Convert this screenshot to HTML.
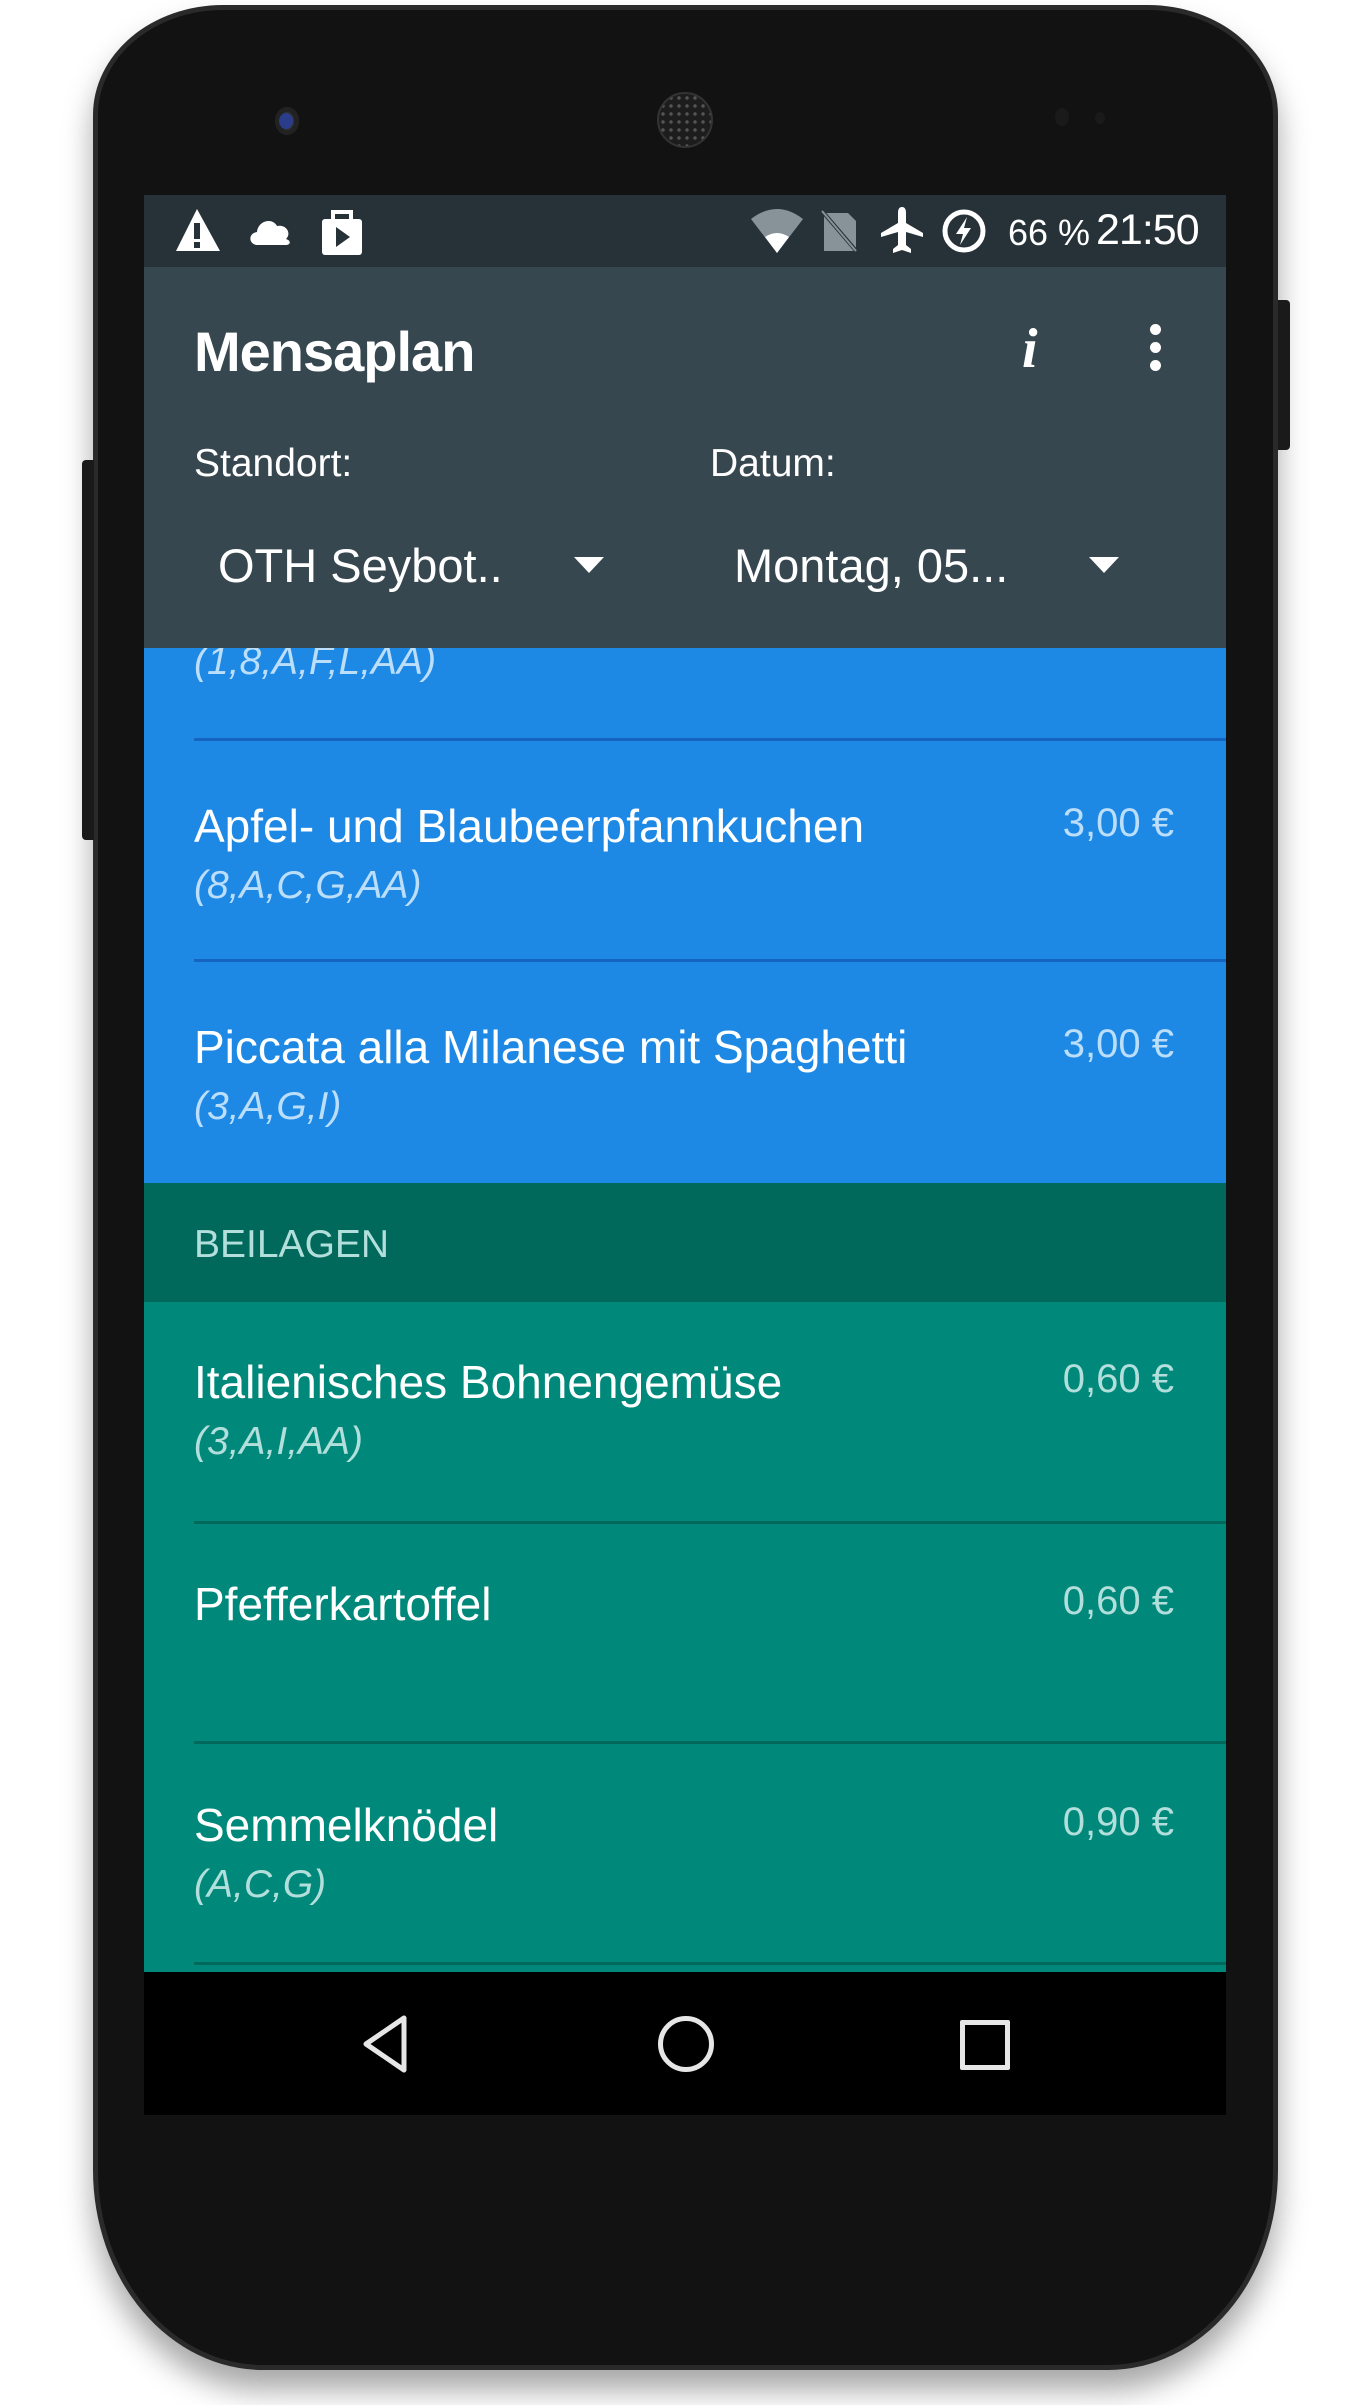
<!DOCTYPE html>
<html><head><meta charset="utf-8"><style>
*{margin:0;padding:0;box-sizing:border-box}
body{width:1370px;height:2405px;background:#fff;position:relative;overflow:hidden;font-family:"Liberation Sans",sans-serif}
.phone{position:absolute;left:93px;top:5px;width:1185px;height:2365px;background:#121212;border-radius:130px 130px 170px 170px/110px 110px 200px 200px;border:5px solid #2a2a2a;box-shadow:0 20px 30px rgba(0,0,0,.35)}
.abs{position:absolute}
.screen{position:absolute;left:144px;top:195px;width:1082px;height:1920px;overflow:hidden}
.t{position:absolute;white-space:nowrap;color:#fff}
.sub{font-size:39px;font-style:italic}
.price{font-size:40px;right:52px}
.div{position:absolute;left:50px;width:1034px;height:3px}
</style></head><body>
<div class="phone"></div>
<div class="abs" style="left:1278px;top:300px;width:12px;height:150px;background:#1a1a1a;border-radius:0 4px 4px 0"></div>
<div class="abs" style="left:82px;top:460px;width:12px;height:380px;background:#1a1a1a;border-radius:4px 0 0 4px"></div>
<div class="abs" style="left:275px;top:107px;width:24px;height:28px;border-radius:50%;background:#333;box-shadow:inset 0 0 0 5px #222"></div>
<div class="abs" style="left:279px;top:113px;width:14px;height:16px;border-radius:50%;background:#2a3d8a"></div>
<div class="abs" style="left:657px;top:92px;width:56px;height:56px;border-radius:50%;background:radial-gradient(#555 1.5px,#1d1d1d 2px) 0 0/8px 8px;border:2px solid #333"></div>
<div class="abs" style="left:1055px;top:108px;width:14px;height:18px;border-radius:50%;background:#1a1a1a"></div>
<div class="abs" style="left:1095px;top:112px;width:10px;height:12px;border-radius:50%;background:#1a1a1a"></div>

<div class="screen">
 <div class="abs" style="left:0;top:0;width:1082px;height:72px;background:#263238"></div>
 <svg class="abs" style="left:30px;top:12px" width="50" height="50" viewBox="0 0 50 50"><path d="M23 2 L46 44 H2 Z" fill="#fff"/><rect x="20" y="16" width="6" height="16" fill="#263238"/><rect x="20" y="35" width="6" height="6" fill="#263238"/></svg>
 <svg class="abs" style="left:102px;top:20px" width="50" height="34" viewBox="0 0 50 34"><path d="M12 30 C2 30 2 18 11 17 C12 6 26 2 31 11 C40 9 46 18 40 24 C46 26 44 30 40 30 Z" fill="#fff"/></svg>
 <svg class="abs" style="left:176px;top:12px" width="46" height="50" viewBox="0 0 46 50"><rect x="2" y="12" width="40" height="36" rx="3" fill="#fff"/><path d="M13 12 V5 H31 V12" stroke="#fff" stroke-width="4" fill="none"/><path d="M16 20 L30 30 L16 40 Z" fill="#263238"/></svg>
 <svg class="abs" style="left:605px;top:12px" width="56" height="50" viewBox="0 0 56 50"><path d="M2 12 Q28 -8 54 12 L28 46 Z" fill="#889399"/><path d="M16 30 Q28 22 40 30 L28 46 Z" fill="#fff"/></svg>
 <svg class="abs" style="left:676px;top:14px" width="40" height="46" viewBox="0 0 40 46"><path d="M4 4 H28 L36 12 V42 H4 Z" fill="#889399"/><path d="M2 2 L38 44" stroke="#263238" stroke-width="4"/><path d="M2 2 L36 42" stroke="#889399" stroke-width="2"/></svg>
 <svg class="abs" style="left:735px;top:10px" width="46" height="52" viewBox="0 0 46 52"><path d="M23 2 Q27 2 27 8 V18 L44 28 V32 L27 27 V40 L32 44 V48 L23 45 L14 48 V44 L19 40 V27 L2 32 V28 L19 18 V8 Q19 2 23 2 Z" fill="#fff"/></svg>
 <svg class="abs" style="left:796px;top:12px" width="48" height="48" viewBox="0 0 48 48"><circle cx="24" cy="24" r="19" stroke="#fff" stroke-width="5" fill="none"/><path d="M27 10 L16 27 H23 L20 38 L31 21 H24 Z" fill="#fff"/></svg>
 <div class="t" style="left:864px;top:16px;font-size:36px;line-height:44px">66 %</div>
 <div class="t" style="left:952px;top:11px;font-size:43px;line-height:48px;letter-spacing:-1px">21:50</div>

 <div class="abs" style="left:0;top:72px;width:1082px;height:381px;background:#37474f;z-index:2">
  <div class="t" style="left:50px;top:52px;font-size:56px;font-weight:bold;letter-spacing:-1px">Mensaplan</div>
  <div class="t" style="left:878px;top:50px;font-size:56px;font-style:italic;font-family:'Liberation Serif',serif;font-weight:bold">i</div>
  <div class="abs" style="left:1006px;top:57px;width:11px;height:11px;border-radius:50%;background:#fff;box-shadow:0 18px 0 #fff,0 36px 0 #fff"></div>
  <div class="t" style="left:50px;top:175px;font-size:39px">Standort:</div>
  <div class="t" style="left:566px;top:175px;font-size:39px">Datum:</div>
  <div class="t" style="left:74px;top:271px;font-size:47px">OTH Seybot..</div>
  <div class="t" style="left:590px;top:271px;font-size:47px">Montag, 05...</div>
  <div class="abs" style="left:430px;top:290px;border-left:15px solid transparent;border-right:15px solid transparent;border-top:16px solid #fff"></div>
  <div class="abs" style="left:945px;top:290px;border-left:15px solid transparent;border-right:15px solid transparent;border-top:16px solid #fff"></div>
 </div>

 <div class="abs" style="left:0;top:453px;width:1082px;height:535px;background:#1e88e5">
  <div class="t sub" style="left:50px;top:-8px;color:#bbdefb">(1,8,A,F,L,AA)</div>
  <div class="div" style="top:90px;background:#1565c0"></div>
  <div class="t" style="left:50px;top:151px;font-size:46px">Apfel- und Blaubeerpfannkuchen</div>
  <div class="t sub" style="left:50px;top:216px;color:#bbdefb">(8,A,C,G,AA)</div>
  <div class="t price" style="top:153px;color:#bbdefb">3,00 €</div>
  <div class="div" style="top:311px;background:#1565c0"></div>
  <div class="t" style="left:50px;top:372px;font-size:46px">Piccata alla Milanese mit Spaghetti</div>
  <div class="t sub" style="left:50px;top:437px;color:#bbdefb">(3,A,G,I)</div>
  <div class="t price" style="top:374px;color:#bbdefb">3,00 €</div>
 </div>

 <div class="abs" style="left:0;top:988px;width:1082px;height:119px;background:#00695c">
  <div class="t" style="left:50px;top:40px;font-size:39px;color:#b2dfdb">BEILAGEN</div>
 </div>

 <div class="abs" style="left:0;top:1107px;width:1082px;height:670px;background:#00897b">
  <div class="t" style="left:50px;top:53px;font-size:46px">Italienisches Bohnengemüse</div>
  <div class="t sub" style="left:50px;top:118px;color:#b2dfdb">(3,A,I,AA)</div>
  <div class="t price" style="top:55px;color:#b2dfdb">0,60 €</div>
  <div class="div" style="top:219px;background:#00695c"></div>
  <div class="t" style="left:50px;top:275px;font-size:46px">Pfefferkartoffel</div>
  <div class="t price" style="top:277px;color:#b2dfdb">0,60 €</div>
  <div class="div" style="top:439px;background:#00695c"></div>
  <div class="t" style="left:50px;top:496px;font-size:46px">Semmelknödel</div>
  <div class="t sub" style="left:50px;top:561px;color:#b2dfdb">(A,C,G)</div>
  <div class="t price" style="top:498px;color:#b2dfdb">0,90 €</div>
  <div class="div" style="top:660px;background:#00695c"></div>
 </div>

 <div class="abs" style="left:0;top:1777px;width:1082px;height:143px;background:#000">
  <svg class="abs" style="left:214px;top:42px" width="56" height="60" viewBox="0 0 56 60"><path d="M46 4 L8 30 L46 56 Z" stroke="#e6e6e6" stroke-width="5" fill="none" stroke-linejoin="round"/></svg>
  <div class="abs" style="left:514px;top:44px;width:56px;height:56px;border-radius:50%;border:5px solid #e6e6e6"></div>
  <div class="abs" style="left:816px;top:48px;width:50px;height:50px;border:5px solid #e6e6e6;border-radius:2px"></div>
 </div>
</div>
</body></html>
